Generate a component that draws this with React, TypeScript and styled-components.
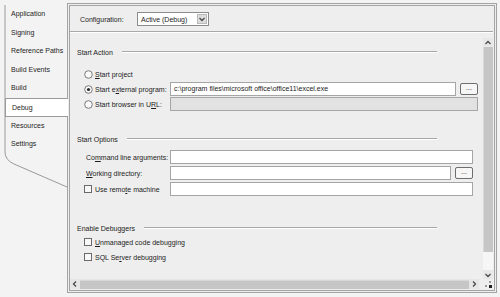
import styled, { createGlobalStyle } from "styled-components";

const GlobalStyle = createGlobalStyle`
  html, body {
    margin: 0;
    padding: 0;
    width: 500px;
    height: 297px;
    overflow: hidden;
    background: #f3f3f3;
    font-family: "Liberation Sans", Arial, sans-serif;
    font-size: 7px;
    color: #1c1c1c;
  }
`;

const tabs = [
  "Application",
  "Signing",
  "Reference Paths",
  "Build Events",
  "Build",
  "Debug",
  "Resources",
  "Settings",
];

function Chevron({ dir }: { dir: "up" | "down" | "left" | "right" }) {
  const d = {
    up: "M1.5 5 L4 2.5 L6.5 5",
    down: "M1.5 3 L4 5.5 L6.5 3",
    left: "M5 1.5 L2.5 4 L5 6.5",
    right: "M3 1.5 L5.5 4 L3 6.5",
  }[dir];
  return (
    <svg width="8" height="8" viewBox="0 0 8 8">
      <path d={d} fill="none" stroke="#4a4a4a" strokeWidth="1.3" />
    </svg>
  );
}

function Radio({ checked }: { checked?: boolean }) {
  return (
    <svg width="9" height="9" viewBox="0 0 9 9">
      <circle cx="4.5" cy="4.5" r="3.8" fill="#fafafa" stroke="#6d6d6d" strokeWidth="0.9" />
      {checked && <circle cx="4.5" cy="4.5" r="1.6" fill="#2a2a2a" />}
    </svg>
  );
}

function App() {
  return (
    <>
      <GlobalStyle />
      <Root>
        <TabColumn>
          <TabEdge width="70" height="200" viewBox="0 0 70 200">
            <path
              d="M5 5 L5 152 Q5 160 14 164 L67 187"
              fill="none"
              stroke="#9a9a9a"
              strokeWidth="1"
            />
          </TabEdge>
          {tabs.map((t) => (
            <Tab key={t} $active={t === "Debug"}>
              {t}
            </Tab>
          ))}
        </TabColumn>
        <Panel>
          <ConfigRow>
            <ConfigLabel>Configuration:</ConfigLabel>
            <Select>
              <SelectText>Active (Debug)</SelectText>
              <SelectArrow>
                <Chevron dir="down" />
              </SelectArrow>
            </Select>
          </ConfigRow>
          <Rule />
          <ScrollFrame>
            <ScrollBody>
              <Content>
                <SectionHeader>
                  <span>Start Action</span>
                  <HeaderLine />
                </SectionHeader>
                <Group $gap={9.5}>
                  <FormRow $h={15}>
                    <OptionLabel>
                      <Radio />
                      <span>
                        <u>S</u>tart project
                      </span>
                    </OptionLabel>
                  </FormRow>
                  <FormRow $h={15}>
                    <OptionLabel>
                      <Radio checked />
                      <span>
                        Start e<u>x</u>ternal program:
                      </span>
                    </OptionLabel>
                    <FieldWithButton>
                      <TextBox>c:\program files\microsoft office\office11\excel.exe</TextBox>
                      <BrowseButton>...</BrowseButton>
                    </FieldWithButton>
                  </FormRow>
                  <FormRow $h={15}>
                    <OptionLabel>
                      <Radio />
                      <span>
                        Start browser in U<u>R</u>L:
                      </span>
                    </OptionLabel>
                    <TextBox $disabled $right={5} />
                  </FormRow>
                </Group>

                <SectionHeader $top={22.5}>
                  <span>Start Options</span>
                  <HeaderLine />
                </SectionHeader>
                <Group $gap={5}>
                  <FormRow $h={16}>
                    <FieldLabel>
                      Co<u>m</u>mand line arguments:
                    </FieldLabel>
                    <TextBox $right={10} />
                  </FormRow>
                  <FormRow $h={16}>
                    <FieldLabel>
                      <u>W</u>orking directory:
                    </FieldLabel>
                    <FieldWithButton $right={10}>
                      <TextBox />
                      <BrowseButton>...</BrowseButton>
                    </FieldWithButton>
                  </FormRow>
                  <FormRow $h={16}>
                    <OptionLabel>
                      <CheckBox />
                      <span>
                        Use remo<u>t</u>e machine
                      </span>
                    </OptionLabel>
                    <TextBox $right={10} />
                  </FormRow>
                </Group>

                <SectionHeader $top={26}>
                  <span>Enable Debuggers</span>
                  <HeaderLine />
                </SectionHeader>
                <Group $gap={1.5}>
                  <FormRow $h={15}>
                    <OptionLabel $wide>
                      <CheckBox />
                      <span>
                        <u>U</u>nmanaged code debugging
                      </span>
                    </OptionLabel>
                  </FormRow>
                  <FormRow $h={15}>
                    <OptionLabel $wide>
                      <CheckBox />
                      <span>
                        SQL Se<u>r</u>ver debugging
                      </span>
                    </OptionLabel>
                  </FormRow>
                </Group>
              </Content>
              <VScroll>
                <ArrowCell>
                  <Chevron dir="up" />
                </ArrowCell>
                <VThumb />
                <VTrack />
                <ArrowCell>
                  <Chevron dir="down" />
                </ArrowCell>
              </VScroll>
            </ScrollBody>
            <HScrollRow>
              <HScroll>
                <ArrowCell>
                  <Chevron dir="left" />
                </ArrowCell>
                <HThumb />
                <ArrowCell>
                  <Chevron dir="right" />
                </ArrowCell>
              </HScroll>
              <Grip>
                <svg width="10" height="10" viewBox="0 0 10 10">
                  <rect x="6" y="6" width="3" height="3" fill="#222" />
                  <rect x="2" y="6" width="2" height="2" fill="#999" />
                  <rect x="6" y="2" width="2" height="2" fill="#999" />
                </svg>
              </Grip>
            </HScrollRow>
          </ScrollFrame>
        </Panel>
      </Root>
    </>
  );
}

export default App;

const Root = styled.div`
  display: flex;
  width: 500px;
  height: 297px;
  box-sizing: border-box;
`;

const TabColumn = styled.div`
  position: relative;
  width: 67px;
  flex-shrink: 0;
  padding-top: 5px;
  box-sizing: border-box;
  z-index: 2;
`;

const TabEdge = styled.svg`
  position: absolute;
  left: 0;
  top: 0;
`;

const Tab = styled.div<{ $active?: boolean }>`
  position: relative;
  height: 18.6px;
  line-height: 18.6px;
  padding-left: 6px;
  margin-left: 5px;
  margin-right: ${(p) => (p.$active ? "-1px" : "0")};
  box-sizing: border-box;
  white-space: nowrap;
  background: ${(p) => (p.$active ? "#ffffff" : "transparent")};
  border-top: ${(p) => (p.$active ? "1px solid #9a9a9a" : "none")};
  border-bottom: ${(p) => (p.$active ? "1px solid #9a9a9a" : "none")};
  border-left: ${(p) => (p.$active ? "1px solid #9a9a9a" : "none")};
  color: #1e1e1e;
`;

const Panel = styled.div`
  flex: 1;
  margin: 3px 3px 4px 0;
  border: 3px double #a4a4a4;
  background: #eeeeee;
  display: flex;
  flex-direction: column;
  box-sizing: border-box;
  min-width: 0;
`;

const ConfigRow = styled.div`
  display: flex;
  align-items: center;
  height: 22px;
  padding: 4px 0 0 10px;
  box-sizing: border-box;
`;

const ConfigLabel = styled.span`
  width: 57px;
`;

const Select = styled.div`
  display: flex;
  align-items: center;
  width: 72px;
  height: 14px;
  background: #ffffff;
  border: 1px solid #8c8c8c;
  box-sizing: border-box;
`;

const SelectText = styled.span`
  flex: 1;
  padding-left: 3px;
`;

const SelectArrow = styled.span`
  width: 10px;
  height: 10px;
  margin-right: 1px;
  display: flex;
  align-items: center;
  justify-content: center;
  background: #dcdcdc;
  border: 1px solid #b9b9b9;
  box-sizing: border-box;
`;

const Rule = styled.div`
  height: 0;
  margin: 3px 1px 0 0;
  border-top: 1px solid #a8a8a8;
  border-bottom: 1px solid #ffffff;
`;

const ScrollFrame = styled.div`
  flex: 1;
  display: flex;
  flex-direction: column;
  margin-top: 5px;
  min-height: 0;
`;

const ScrollBody = styled.div`
  flex: 1;
  display: flex;
  min-height: 0;
`;

const Content = styled.div`
  flex: 1;
  padding: 9px 0 0 7px;
  overflow: hidden;
`;

const SectionHeader = styled.div<{ $top?: number }>`
  display: flex;
  align-items: center;
  height: 10px;
  margin-top: ${(p) => p.$top ?? 0}px;
  padding-right: 46px;
  white-space: nowrap;
`;

const HeaderLine = styled.div`
  flex: 1;
  margin-left: 9px;
  border-top: 1px solid #a8a8a8;
  border-bottom: 1px solid #ffffff;
`;

const Group = styled.div<{ $gap: number }>`
  margin-top: ${(p) => p.$gap}px;
  padding-left: 7px;
`;

const FormRow = styled.div<{ $h: number }>`
  display: flex;
  align-items: center;
  height: ${(p) => p.$h}px;
`;

const OptionLabel = styled.label<{ $wide?: boolean }>`
  display: flex;
  align-items: center;
  gap: 2px;
  width: ${(p) => (p.$wide ? "auto" : "86px")};
  flex-shrink: 0;
  white-space: nowrap;
`;

const FieldLabel = styled.label`
  width: 86px;
  flex-shrink: 0;
  padding-left: 2px;
  box-sizing: border-box;
  white-space: nowrap;
`;

const CheckBox = styled.span`
  display: inline-block;
  width: 8px;
  height: 8px;
  margin-right: 1px;
  border: 1px solid #6a6a6a;
  background: #f8f8f8;
  box-sizing: border-box;
`;

const FieldWithButton = styled.div<{ $right?: number }>`
  flex: 1;
  display: flex;
  align-items: center;
  gap: 4px;
  margin-right: ${(p) => p.$right ?? 5}px;
`;

const TextBox = styled.div<{ $disabled?: boolean; $right?: number }>`
  flex: 1;
  height: 14px;
  line-height: 12px;
  padding-left: 3px;
  margin-right: ${(p) => p.$right ?? 0}px;
  border: 1px solid #a5a5a5;
  background: ${(p) => (p.$disabled ? "#e2e2e2" : "#ffffff")};
  box-sizing: border-box;
  white-space: nowrap;
  overflow: hidden;
`;

const BrowseButton = styled.div`
  width: 18px;
  height: 12px;
  line-height: 8px;
  text-align: center;
  border: 1px solid #6e6e6e;
  border-radius: 2px;
  background: #f6f6f6;
  box-sizing: border-box;
  flex-shrink: 0;
`;

const VScroll = styled.div`
  width: 10px;
  margin-right: 1px;
  display: flex;
  flex-direction: column;
  background: #e8e8e8;
`;

const ArrowCell = styled.div`
  width: 10px;
  height: 9px;
  display: flex;
  align-items: center;
  justify-content: center;
  flex-shrink: 0;
`;

const VThumb = styled.div`
  height: 205px;
  background: #c6c6c6;
  border-left: 1px solid #d8d8d8;
`;

const VTrack = styled.div`
  flex: 1;
  background: #f6f6f6;
`;

const HScrollRow = styled.div`
  display: flex;
  height: 10px;
  margin-bottom: 1px;
`;

const HScroll = styled.div`
  flex: 1;
  display: flex;
  align-items: center;
  background: #e6e6e6;
  margin-right: 3px;
`;

const HThumb = styled.div`
  flex: 1;
  height: 8px;
  background: #c6c6c6;
  border-top: 1px solid #d8d8d8;
`;

const Grip = styled.div`
  width: 12px;
  display: flex;
  align-items: flex-end;
  justify-content: center;
`;
